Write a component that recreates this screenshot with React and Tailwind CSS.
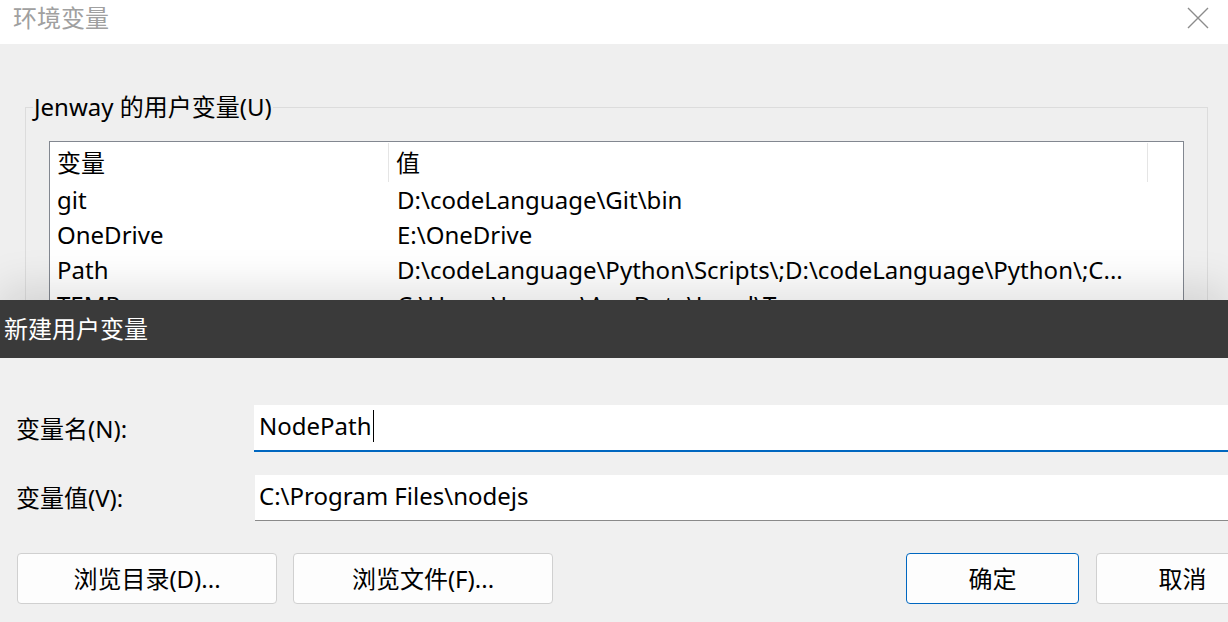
import React from 'react';

const rows = [
  { name: 'git', value: 'D:\\codeLanguage\\Git\\bin' },
  { name: 'OneDrive', value: 'E:\\OneDrive' },
  { name: 'Path', value: 'D:\\codeLanguage\\Python\\Scripts\\;D:\\codeLanguage\\Python\\;C...' },
  { name: 'TEMP', value: 'C:\\Users\\Jenway\\AppData\\Local\\Temp' },
];

const font = { fontFamily: '"Noto Sans", "Noto Sans CJK SC", sans-serif' };

const CloseIcon = () => (
  <svg width="22" height="22" viewBox="0 0 22 22" fill="none" stroke="#8c8c8c" strokeWidth="1.4">
    <path d="M1 1 L21 21 M21 1 L1 21" />
  </svg>
);

const Button = ({ children, primary, className = '' }) => (
  <button
    className={`h-[51px] shrink-0 rounded-[4px] bg-[#fdfdfd] text-[24px] leading-none text-black ${
      primary ? 'border border-[#0067c0]' : 'border border-[#d0d0d0]'
    } ${className}`}
  >
    {children}
  </button>
);

export default function App() {
  return (
    <div className="w-[1228px] h-[622px] overflow-hidden bg-[#f0f0f0] text-black" style={font}>
      {/* background window: 环境变量 */}
      <div className="h-[300px] overflow-hidden flex flex-col">
        <div className="h-[44px] shrink-0 bg-white flex items-center justify-between pl-[13px] pr-[19px] pb-[9px]">
          <span className="text-[24px] leading-[30px] text-[#a0a0a0]">环境变量</span>
          <CloseIcon />
        </div>
        <div className="flex-1 bg-[#efefef] pt-[47px] pl-[25px] pr-[20px]">
          <fieldset className="border border-[#dcdcdc] pb-4">
            <legend className="ml-[7px] px-[1px] text-[24px] leading-[32px]">Jenway 的用户变量(U)</legend>
            <div className="mt-[18px] mx-[23px] border border-[#828790] bg-white">
              <div className="h-[41px] flex items-center text-[24px]">
                <div className="w-[339px] shrink-0 pl-[7px] self-stretch flex items-center border-r border-[#e5e5e5] my-[1px]">变量</div>
                <div className="flex-1 pl-[7px] self-stretch flex items-center border-r border-[#e5e5e5] my-[1px]">值</div>
                <div className="w-[35px] shrink-0" />
              </div>
              {rows.map((r) => (
                <div key={r.name} className="h-[35px] flex items-center text-[24px] pb-[2px]">
                  <div className="w-[340px] shrink-0 pl-[7px]">{r.name}</div>
                  <div className="flex-1 pl-[7px] whitespace-nowrap">{r.value}</div>
                </div>
              ))}
            </div>
          </fieldset>
        </div>
      </div>

      {/* 新建用户变量 dialog */}
      <div className="relative z-10 shadow-[0_-12px_40px_rgba(0,0,0,0.12)]">
        <div className="h-[58px] bg-[#3a3a3a] flex items-center pl-[4px]">
          <span className="text-[24px] text-white">新建用户变量</span>
        </div>
        <div className="h-[264px] bg-[#f0f0f0] pt-[47px] overflow-hidden">
          <div className="flex items-center">
            <div className="w-[254px] shrink-0 pl-[16px] text-[24px]">变量名(N):</div>
            <div className="w-[1000px] shrink-0 h-[47px] bg-white border-b-2 border-[#0067c0] flex items-center pl-[5px] pb-[4px] text-[24px]">
              NodePath
              <span className="inline-block w-[1px] h-[32px] bg-black ml-[1px]" />
            </div>
          </div>
          <div className="flex items-center mt-[23px]">
            <div className="w-[255px] shrink-0 pl-[16px] text-[24px]">变量值(V):</div>
            <div className="w-[1000px] shrink-0 h-[46px] bg-white border-b border-[#8a8a8a] flex items-center pl-[4px] pb-[4px] text-[24px]">
              C:\Program Files\nodejs
            </div>
          </div>
          <div className="flex mt-[32px] pl-[17px]">
            <Button className="w-[260px]">浏览目录(D)...</Button>
            <Button className="w-[260px] ml-[16px]">浏览文件(F)...</Button>
            <Button primary className="w-[173px] ml-[353px]">确定</Button>
            <Button className="w-[173px] ml-[17px]">取消</Button>
          </div>
        </div>
      </div>
    </div>
  );
}
